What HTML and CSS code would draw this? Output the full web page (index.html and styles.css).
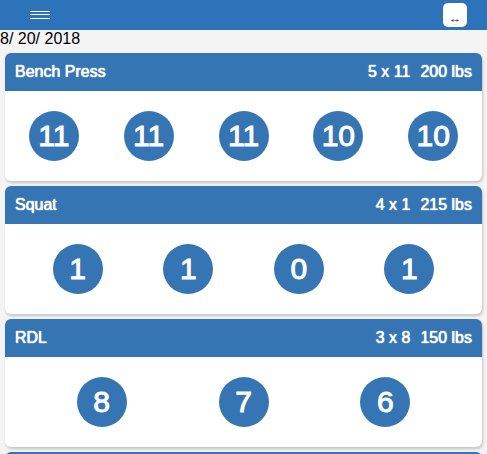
FILE: index.html
```
<!DOCTYPE html>
<html lang="en">
<head>
<meta charset="utf-8">
<title>Workout</title>
<link rel="stylesheet" href="styles.css">
</head>
<body>
<header class="topbar">
  <button class="menu" type="button" aria-label="Menu">
    <svg width="20" height="8" viewBox="0 0 20 8" fill="#fff" shape-rendering="crispEdges"><path d="M0 0h20v1H0zM0 3h20v1H0zM0 7h20v1H0z"/></svg>
  </button>
  <button class="swap" type="button" aria-label="Expand">
    <svg width="24" height="24" viewBox="0 0 24 24"><path d="M8 17.5l2.4-1.5v3zM16 17.5l-2.4-1.5v3z" fill="#555"/><path d="M10 17.5h4" stroke="#888"/><path d="M10 21.5h4" stroke="#eee"/></svg>
  </button>
</header>
<main>
  <time class="date" datetime="2018-08-20">8/ 20/ 2018</time>
  <section class="card">
    <header class="card-head"><span class="name">Bench Press</span><span>5 x 11</span><span>200 lbs</span></header>
    <div class="sets five">
      <button class="set" type="button">11</button><button class="set" type="button">11</button><button class="set" type="button">11</button><button class="set" type="button">10</button><button class="set" type="button">10</button>
    </div>
  </section>
  <section class="card">
    <header class="card-head"><span class="name">Squat</span><span>4 x 1</span><span>215 lbs</span></header>
    <div class="sets four">
      <button class="set" type="button">1</button><button class="set" type="button">1</button><button class="set" type="button">0</button><button class="set" type="button">1</button>
    </div>
  </section>
  <section class="card">
    <header class="card-head"><span class="name">RDL</span><span>3 x 8</span><span>150 lbs</span></header>
    <div class="sets three">
      <button class="set" type="button">8</button><button class="set" type="button">7</button><button class="set" type="button">6</button>
    </div>
  </section>
  <section class="card">
    <header class="card-head"></header>
  </section>
</main>
</body>
</html>
```
FILE: styles.css
```
* {
  box-sizing: border-box;
}

body {
  margin: 0;
  height: 100vh;
  overflow: hidden;
  background: #f4f4f4;
  color: #000;
  font: 16px/18px "Liberation Sans", Helvetica, Arial, sans-serif;
}

button {
  border: 0;
  padding: 0;
  font: inherit;
}

.topbar {
  display: flex;
  align-items: center;
  justify-content: space-between;
  height: 30px;
  padding: 0 20px 0 30px;
  background: #2d73b9;
}

.menu {
  display: flex;
  background: none;
}

.swap {
  display: flex;
  border-radius: 5px;
  background: #fff;
}

.date {
  display: block;
}

.card {
  margin: 5px;
  border-radius: 6px;
  background: #fff;
  box-shadow: 1px 2px 3px rgba(0, 0, 0, 0.2);
}

.card-head {
  display: flex;
  align-items: center;
  gap: 10px;
  height: 38px;
  padding: 0 10px;
  border-radius: 6px 6px 0 0;
  background: #3575b4;
  color: #fff;
  text-shadow: 0 0 1px #fff, 0 0 1px #fff;
}

.name {
  flex: 1;
}

.sets {
  display: flex;
  justify-content: space-between;
  padding: 20px 0;
}

.five {
  padding-inline: 5%;
}

.four {
  padding-inline: 10%;
}

.three {
  padding-inline: 15%;
}

.set {
  width: 50px;
  height: 50px;
  border-radius: 50%;
  background: #3575b4;
  color: #fff;
  font-size: 30px;
  line-height: 50px;
  -webkit-text-stroke: 1px #fff;
}
```
